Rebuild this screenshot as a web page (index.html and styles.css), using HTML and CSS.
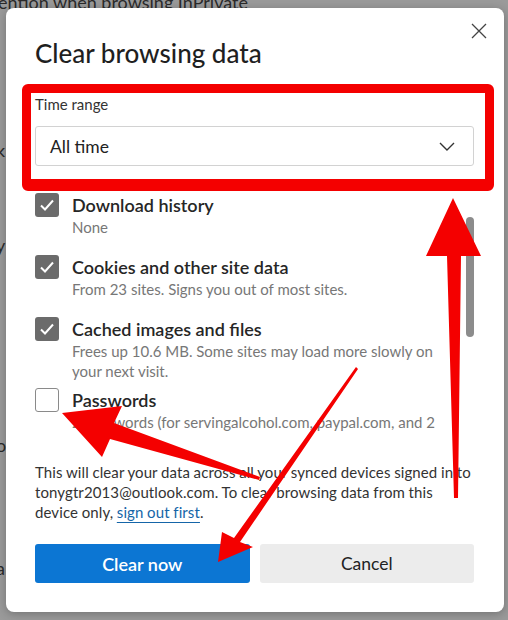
FILE: index.html
```html
<!DOCTYPE html>
<html>
<head>
	<title>Clear browsing data</title>
	<link rel="stylesheet" href="styles.css">
</head>
<body>
	<div class="page">
		<div class="page-line">ention when browsing InPrivate</div>
		<div class="page-frag frag-1">k</div>
		<div class="page-frag frag-2">y</div>
		<div class="page-frag frag-3">o:</div>
		<div class="page-frag frag-4">a</div>
	</div>

	<div class="modal">
		<div class="dialog">
			<div class="dialog-head">
				<h1>Clear browsing data</h1>
				<button class="close" aria-label="Close">
					<svg width="16" height="16" viewBox="0 0 16 16"><path d="M1 1L15 15M15 1L1 15" stroke="#444" stroke-width="1.3" fill="none"/></svg>
				</button>
			</div>

			<label class="field-label">Time range</label>
			<div class="select">
				<span>All time</span>
				<svg width="16" height="9" viewBox="0 0 16 9"><path d="M1 1L8 8L15 1" stroke="#333" stroke-width="1.4" fill="none"/></svg>
			</div>

			<div class="options">
				<div class="options-list">
					<div class="option">
						<span class="box checked"><svg width="24" height="24" viewBox="0 0 24 24"><path d="M6 12.5L10 16.5L18 7.5" stroke="#fff" stroke-width="2" fill="none"/></svg></span>
						<div>
							<div class="option-title">Browsing history</div>
							<div class="option-desc">None</div>
						</div>
					</div>
					<div class="option">
						<span class="box checked"><svg width="24" height="24" viewBox="0 0 24 24"><path d="M6 12.5L10 16.5L18 7.5" stroke="#fff" stroke-width="2" fill="none"/></svg></span>
						<div>
							<div class="option-title">Download history</div>
							<div class="option-desc">None</div>
						</div>
					</div>
					<div class="option">
						<span class="box checked"><svg width="24" height="24" viewBox="0 0 24 24"><path d="M6 12.5L10 16.5L18 7.5" stroke="#fff" stroke-width="2" fill="none"/></svg></span>
						<div>
							<div class="option-title">Cookies and other site data</div>
							<div class="option-desc">From 23 sites. Signs you out of most sites.</div>
						</div>
					</div>
					<div class="option">
						<span class="box checked"><svg width="24" height="24" viewBox="0 0 24 24"><path d="M6 12.5L10 16.5L18 7.5" stroke="#fff" stroke-width="2" fill="none"/></svg></span>
						<div>
							<div class="option-title">Cached images and files</div>
							<div class="option-desc">Frees up 10.6 MB. Some sites may load more slowly on your next visit.</div>
						</div>
					</div>
					<div class="option">
						<span class="box"></span>
						<div>
							<div class="option-title">Passwords</div>
							<div class="option-desc">2 passwords (for servingalcohol.com, paypal.com, and 2 more)</div>
						</div>
					</div>
				</div>
				<div class="scrollbar"><div class="thumb"></div></div>
			</div>

			<p class="note">This will clear your data across all your synced devices signed in to tonygtr2013@outlook.com. To clear browsing data from this device only, <a href="#">sign out first</a>.</p>

			<div class="actions">
				<button class="btn primary">Clear now</button>
				<button class="btn">Cancel</button>
			</div>
		</div>
	</div>

	<!-- annotations drawn over the screenshot -->
	<div class="highlight"></div>
	<svg class="arrows" width="508" height="620" viewBox="0 0 508 620">
		<polygon points="453,198 481,256 461,256 458,498 454,498 447,256 426,256"/>
		<polygon points="62,413 122,406 114,423 260,477 259,480 110,439 102,457"/>
		<polygon points="218,562 222,532 234,538 356,367 358,369 240,542 253,547"/>
	</svg>
</body>
</html>
```

FILE: styles.css
```css
body {
	margin: 0;
	width: 508px;
	height: 620px;
	overflow: hidden;
	position: relative;
	background: #9a9a9a;
	font-family: Lato, "Open Sans", sans-serif;
	color: #222;
}

.page {
	color: #2a2a2a;
	font-size: 18px;
}

.page-line {
	margin: -8px 0 0 -2px;
	line-height: 20px;
	white-space: nowrap;
}

.page-frag {
	line-height: 24px;
	margin-left: -4px;
}

.frag-1 { margin-top: 126px; }
.frag-2 { margin-top: 71px; }
.frag-3 { margin-top: 176px; }
.frag-4 { margin-top: 99px; }

.modal {
	position: absolute;
	top: 0;
	left: 0;
	right: 0;
	bottom: 0;
	display: flex;
	padding: 8px 4px 8px 6px;
}

.dialog {
	flex: 1;
	background: #fff;
	border-radius: 8px;
	padding: 29px 30px 29px 29px;
	box-shadow: 0 2px 10px rgba(0, 0, 0, 0.25);
}

.dialog-head {
	display: flex;
	justify-content: space-between;
	align-items: flex-start;
}

h1 {
	margin: 0;
	font-size: 26px;
	line-height: 32px;
	font-weight: 500;
	color: #1f1f1f;
}

.close {
	border: 0;
	padding: 0;
	background: none;
	width: 16px;
	height: 16px;
	margin: -14px -13px 0 0;
}

.close svg {
	display: block;
}

.field-label {
	display: block;
	margin-top: 25px;
	font-size: 15px;
	line-height: 20px;
	color: #333;
}

.select {
	margin-top: 12px;
	height: 40px;
	box-sizing: border-box;
	border: 1px solid #d2d2d2;
	border-radius: 3px;
	display: flex;
	align-items: center;
	justify-content: space-between;
	padding: 0 18px 0 14px;
	font-size: 17.5px;
	color: #222;
}

.options {
	margin-top: 10px;
	height: 264px;
	display: flex;
	overflow: hidden;
}

.options-list {
	flex: 1;
	margin-top: -45px;
}

.option {
	display: flex;
	gap: 13px;
	min-height: 62px;
	padding-bottom: 7px;
	box-sizing: border-box;
}

.box {
	flex: none;
	width: 24px;
	height: 24px;
	box-sizing: border-box;
	border: 1px solid #8a8a8a;
	border-radius: 3px;
	background: #fff;
}

.box.checked {
	border: 0;
	background: #6b6b6b;
}

.box svg {
	display: block;
}

.option-title {
	font-size: 18px;
	line-height: 24px;
	font-weight: 600;
	color: #262626;
}

.option-desc {
	font-size: 15px;
	line-height: 20px;
	color: #777;
	padding-right: 30px;
}

.scrollbar {
	flex: none;
	width: 8px;
}

.thumb {
	margin-top: 41px;
	height: 120px;
	border-radius: 4px;
	background: #8c8c8c;
}

.note {
	margin: 22px -3px 0 0;
	font-size: 15px;
	line-height: 20px;
	letter-spacing: 0.1px;
	word-spacing: -0.3px;
	color: #333;
}

.note a {
	color: #1565a8;
	text-decoration: underline;
	text-underline-offset: 4px;
}

.actions {
	margin-top: 22px;
	display: grid;
	grid-template-columns: 1fr 1fr;
	gap: 10px;
}

.btn {
	height: 39px;
	border: 0;
	border-radius: 3px;
	background: #ececec;
	font-family: inherit;
	font-size: 17.5px;
	color: #222;
}

.btn.primary {
	background: #0c76d3;
	color: #fff;
	font-size: 18px;
	font-weight: 600;
}

.highlight {
	position: absolute;
	left: 22px;
	top: 84px;
	width: 472px;
	height: 107px;
	box-sizing: border-box;
	border: 9px solid #f40000;
	border-bottom-width: 12px;
	border-radius: 6px;
}

.arrows {
	position: absolute;
	top: 0;
	left: 0;
	fill: #f40000;
}
```
